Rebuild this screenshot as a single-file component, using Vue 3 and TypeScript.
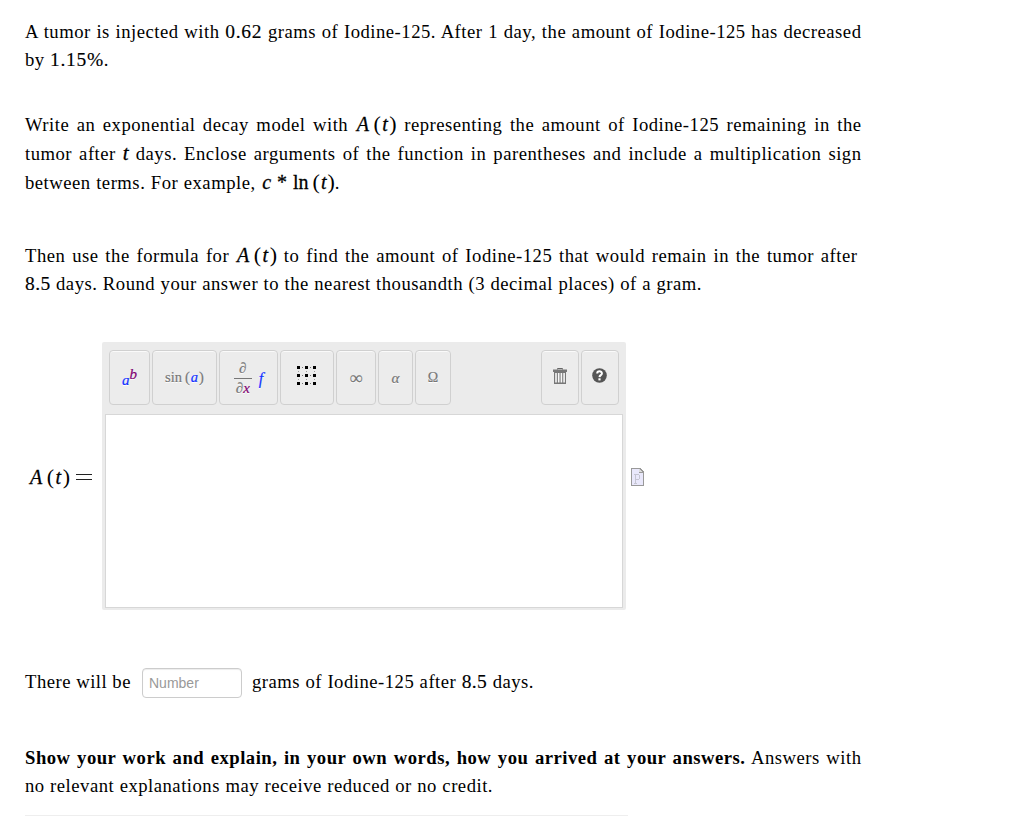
<script setup lang="ts">
import { ref } from 'vue'

const amount = ref('')
const dots = [0, 8, 16]
const minor = [4, 12]
</script>

<template>
  <main class="question">
    <div class="para intro">
      <div class="line full">
        A tumor is injected with <span class="num wide">0.62</span> grams of Iodine-125. After 1
        day, the amount of Iodine-125 has decreased
      </div>
      <div class="line percent">by <span class="num wide">1.15%</span>.</div>
    </div>

    <div class="para model">
      <div class="line full">
        Write an exponential decay model with
        <span class="fn"><i>A</i><b>(</b><i>t</i><b>)</b></span> representing the amount of
        Iodine-125 remaining in the
      </div>
      <div class="line full">
        tumor after <i class="var">t</i> days. Enclose arguments of the function in parentheses and
        include a multiplication sign
      </div>
      <div class="line example">
        between terms. For example,
        <span class="expr"
          ><i>c</i><span class="star">*</span><span class="ln">ln</span><b>(</b><i>t</i><b>)</b></span
        >.
      </div>
    </div>

    <div class="para formula">
      <div class="line after">
        Then use the formula for <span class="fn"><i>A</i><b>(</b><i>t</i><b>)</b></span> to find
        the amount of Iodine-125 that would remain in the tumor after
      </div>
      <div class="line round">
        <span class="num">8.5</span> days. Round your answer to the nearest thousandth (3 decimal
        places) of a gram.
      </div>
    </div>

    <div class="answer">
      <div class="answer__label">
        <span class="fn"><i>A</i><b>(</b><i>t</i><b>)</b></span>
        <svg class="equals" width="16" height="8" viewBox="0 0 16 8">
          <path d="M0 1.5H16M0 6.5H16" stroke="#222" />
        </svg>
      </div>
      <div class="editor">
        <div class="toolbar">
          <button class="tool power"><i class="blue">a</i><i class="plum">b</i></button>
          <button class="tool sine">sin<span class="paren">(</span><i class="blue">a</i>)</button>
          <button class="tool partial">
            <span class="frac">
              <span class="frac__top">∂</span>
              <span class="frac__bottom">∂<i class="plum">x</i></span>
            </span>
            <i class="blue">f</i>
          </button>
          <button class="tool matrix" aria-label="Matrix">
            <svg width="20" height="20" viewBox="0 0 20 20" shape-rendering="crispEdges">
              <template v-for="y in dots" :key="y">
                <rect v-for="x in dots" :key="x" :x="x" :y="y" width="3" height="3" />
                <rect
                  v-for="x in minor"
                  :key="`h${x}`"
                  :x="x + 1"
                  :y="y + 1"
                  width="1"
                  height="1"
                  fill="#777"
                />
                <rect
                  v-for="x in minor"
                  :key="`v${x}`"
                  :x="y + 1"
                  :y="x + 1"
                  width="1"
                  height="1"
                  fill="#999"
                />
              </template>
            </svg>
          </button>
          <button class="tool infinity">∞</button>
          <button class="tool alpha"><i>α</i></button>
          <button class="tool omega">Ω</button>
          <button class="tool trash" aria-label="Clear">
            <svg width="14" height="16" viewBox="0 0 14 16">
              <path d="M4.5 1.5V.5H9.5V1.5" fill="none" stroke="#666" />
              <path d="M0 1.5H14V4H0Z" fill="#777" />
              <path d="M1 4H13V16H1Z" fill="#777" />
              <path d="M3 5V14.5M5.7 5V14.5M8.4 5V14.5M11.1 5V14.5" stroke="#f7f7f7" stroke-width="1.6" />
            </svg>
          </button>
          <button class="tool help" aria-label="Help">
            <svg width="15" height="15" viewBox="0 0 15 15">
              <circle cx="7.5" cy="7.5" r="7.3" fill="#555" />
              <path
                d="M5.2 5.6C5.2 2.6 9.9 2.7 9.9 5.4C9.9 7.1 7.6 7.2 7.5 9.1"
                fill="none"
                stroke="#fff"
                stroke-width="2"
              />
              <rect x="6.4" y="10.3" width="2.2" height="2.1" fill="#fff" />
            </svg>
          </button>
        </div>
        <div class="canvas"></div>
      </div>
      <svg class="preview" width="13" height="18" viewBox="0 0 13 18" shape-rendering="crispEdges">
        <path d="M0 0H9L13 4V18H0Z" fill="#999" />
        <path d="M1 1H8V5H12V17H1Z" fill="#e9e8fb" />
        <path d="M8 1H9V2H10V3H11V4H8Z" fill="#ddd" />
        <path
          d="M3 6H8V7H9V11H8V12H5V15H6V16H3V15H4V7H3ZM5 7V11H8V7Z"
          fill="#c5c5d2"
          fill-rule="evenodd"
        />
      </svg>
    </div>

    <div class="para result">
      <span class="result__before">There will be</span>
      <input v-model="amount" class="number" type="text" placeholder="Number" />
      <div class="line result__after">
        grams of Iodine-125 after <span class="num">8.5</span> days.
      </div>
    </div>

    <div class="para explain">
      <div class="line full">
        <strong>Show your work and explain, in your own words, how you arrived at your answers.</strong>
        Answers with
      </div>
      <div class="line credit">no relevant explanations may receive reduced or no credit.</div>
    </div>
    <div class="rule"></div>
  </main>
</template>

<style>
body {
  margin: 0;
  background: #fff;
}
</style>

<style scoped>
.question {
  box-sizing: border-box;
  display: flex;
  flex-direction: column;
  height: 816px;
  padding: 18px 0 0 25px;
  overflow: hidden;
  font-family: 'Liberation Serif', serif;
  font-size: 18.667px;
  letter-spacing: 0.5px;
  color: #000;
}
.para {
  flex: none;
  line-height: 28px;
}
.line {
  height: 28px;
  white-space: nowrap;
  text-align: justify;
  text-align-last: justify;
}
.full {
  width: 836.5px;
  white-space: normal;
}
.percent {
  width: 84px;
}
.model {
  margin-top: 36px;
}
.model .line {
  height: 29px;
  line-height: 29px;
}
.example {
  width: 315px;
}
.formula {
  margin-top: 45px;
}
.after {
  width: 832.5px;
  white-space: normal;
}
.round {
  width: 677px;
  white-space: normal;
}
.num {
  font-size: 19.5px;
  letter-spacing: 0.4px;
  line-height: 1;
  -webkit-text-stroke: 0.15px #000;
}
.wide {
  letter-spacing: 0.7px;
}
.fn,
.expr {
  display: inline-flex;
  align-items: baseline;
  font-size: 20px;
  line-height: 20px;
  letter-spacing: 0;
  -webkit-text-stroke: 0.3px #000;
}
.fn {
  width: 41px;
}
.fn i,
.expr i {
  padding: 0 1px;
}
.fn i:first-child {
  width: 14px;
}
.fn b,
.expr b {
  font-weight: normal;
  font-size: 22px;
  -webkit-text-stroke: 0;
}
.fn b:first-of-type,
.expr b:first-of-type {
  margin-left: 2px;
}
.fn i:nth-of-type(2) {
  padding: 0 1.5px;
}
.var {
  font-size: 21px;
  line-height: 1;
  letter-spacing: 0;
  -webkit-text-stroke: 0.3px #000;
}
.star {
  margin: 0 6px 0 5px;
}
.ln {
  margin-right: 2px;
}
.answer {
  display: flex;
  flex: none;
  align-items: center;
  height: 268px;
  margin-top: 44px;
}
.answer__label {
  display: flex;
  align-items: center;
  width: 73px;
  margin-left: 4px;
  padding-top: 2px;
}
.answer__label .fn {
  margin-right: 6px;
}
.editor {
  box-sizing: border-box;
  display: flex;
  flex-direction: column;
  width: 524px;
  height: 268px;
  padding: 8px 3px 2px;
  background: #ebebeb;
  border-radius: 2px;
}
.toolbar {
  display: flex;
  gap: 2px;
  height: 55px;
  padding: 0 4px;
}
.tool {
  box-sizing: border-box;
  display: flex;
  align-items: center;
  justify-content: center;
  height: 55px;
  padding: 0;
  border: 1px solid #d0d0d0;
  border-radius: 4px;
  background: #ececec;
  box-shadow: inset 0 1px 0 #fafafa;
  color: #777;
  font: 14px/1 'Liberation Serif', serif;
  text-shadow: 0 1px 0 #fff;
  -webkit-text-stroke: 0.2px;
}
.blue {
  color: #1433ff;
}
.plum {
  color: #800070;
}
.power {
  width: 41px;
  font-size: 15px;
}
.power .blue {
  padding-top: 6px;
}
.power .plum {
  padding-bottom: 7px;
}
.sine {
  width: 65px;
  padding-bottom: 1px;
  font-size: 14.5px;
}
.paren {
  margin-left: 3px;
}
.sine .blue {
  padding: 0 1px;
}
.partial {
  gap: 7px;
  width: 59px;
  padding-top: 2px;
}
.partial > .blue {
  font-size: 16px;
}
.frac {
  display: flex;
  flex-direction: column;
  width: 18px;
  font-size: 15px;
}
.frac__top {
  padding-bottom: 2px;
  border-bottom: 1px solid #777;
}
.frac__bottom {
  padding-top: 2px;
}
.matrix {
  width: 54px;
  padding-bottom: 4px;
}
.infinity {
  width: 40px;
  font-size: 18px;
}
.alpha {
  width: 35px;
  padding-top: 1px;
  font-size: 15px;
}
.omega {
  width: 36px;
}
.trash {
  width: 38px;
  margin-left: auto;
  padding-bottom: 3px;
}
.help {
  width: 38px;
  padding: 0 1px 4px 0;
}
.canvas {
  box-sizing: border-box;
  flex: 1;
  margin-top: 9px;
  border: 1px solid #d7d7d7;
  background: #fff;
}
.preview {
  margin: 2px 0 0 5px;
}
.result {
  display: flex;
  height: 30px;
  margin-top: 58px;
}
.result__before {
  width: 117px;
}
.number {
  box-sizing: border-box;
  width: 100px;
  height: 30px;
  padding: 0 6px;
  border: 1px solid #ccc;
  border-radius: 4px;
  box-shadow: inset 0 1px 1px rgba(0, 0, 0, 0.075);
  font: 14px 'Liberation Sans', sans-serif;
}
.number::placeholder {
  color: #999;
}
.result__after {
  width: 282px;
  margin-left: 10px;
}
.explain {
  margin-top: 46px;
}
.credit {
  width: 468px;
}
.rule {
  flex: none;
  width: 603px;
  height: 1px;
  margin-top: 15px;
  background: #eee;
}
</style>
